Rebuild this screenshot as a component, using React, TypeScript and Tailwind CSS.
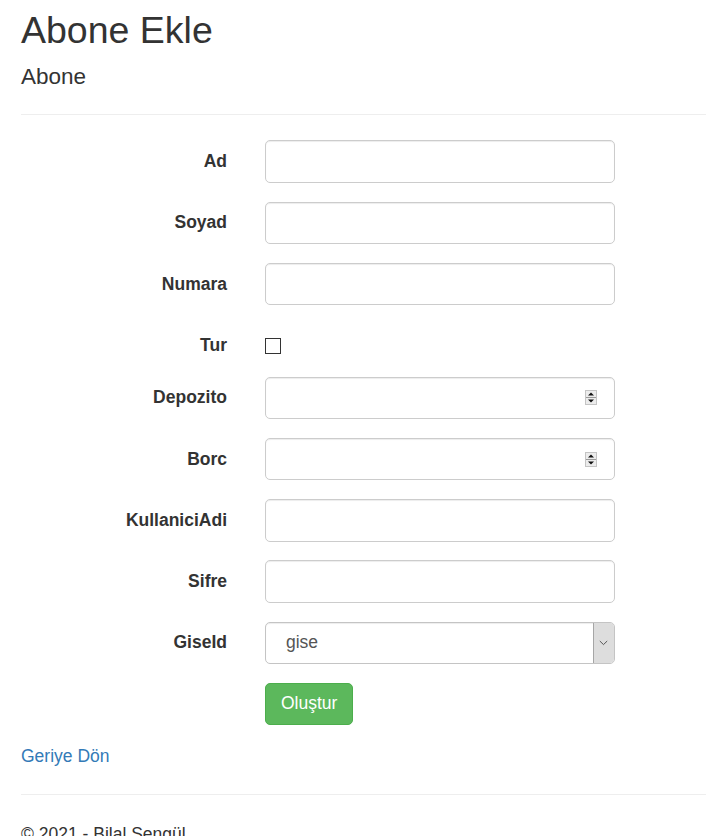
import React from "react";

const inputBox =
  "h-[42.5px] w-full rounded-[5px] border border-[#cccccc] bg-white px-[15px] text-[17.5px] text-[#555555] shadow-[inset_0_1px_1px_rgba(0,0,0,0.075)] outline-none";

function Spinner() {
  return (
    <svg width="12" height="15" viewBox="0 0 12 15" className="shrink-0">
      <rect x="0.5" y="0.5" width="11" height="14" fill="#ececec" stroke="#c4c4c4" />
      <line x1="1" y1="7.5" x2="11" y2="7.5" stroke="#9a9a9a" />
      <path d="M3 5.5 L6 2.5 L9 5.5 Z" fill="#111" />
      <path d="M3 9.5 L6 12.5 L9 9.5 Z" fill="#111" />
    </svg>
  );
}

function Row({ label, children }: { label: string; children: React.ReactNode }) {
  return (
    <div className="mb-[18.75px] flex">
      <label className="w-[206px] shrink-0 pt-[8.75px] text-right text-[17.5px] font-bold leading-[25px]">
        {label}
      </label>
      <div className="ml-[38px] w-[349.5px]">{children}</div>
    </div>
  );
}

function TextField() {
  return <input type="text" className={inputBox} />;
}

function NumberField() {
  return (
    <div className="flex h-[42.5px] w-full items-center rounded-[5px] border border-[#cccccc] bg-white pr-[17px] shadow-[inset_0_1px_1px_rgba(0,0,0,0.075)]">
      <input type="text" className="h-full min-w-0 flex-1 bg-transparent px-[15px] text-[17.5px] text-[#555555] outline-none" />
      <Spinner />
    </div>
  );
}

export default function App() {
  return (
    <div
      className="min-h-[836px] w-[706px] overflow-hidden bg-white pl-[21px] text-[17.5px] leading-[25px] text-[#333333]"
      style={{ fontFamily: '"Liberation Sans", Arial, sans-serif' }}
    >
      <h2 className="mt-[9.7px] text-[37.5px] font-normal leading-[41.25px]">Abone Ekle</h2>
      <h4 className="mt-[13.7px] text-[22.5px] font-normal leading-[24.75px]">Abone</h4>
      <hr className="mt-[25px] mb-[25px] border-0 border-t border-[#eeeeee]" />

      <form onSubmit={(e) => e.preventDefault()}>
        <Row label="Ad">
          <TextField />
        </Row>
        <Row label="Soyad">
          <TextField />
        </Row>
        <Row label="Numara">
          <TextField />
        </Row>
        <div className="mb-[18.75px] flex">
          <label className="w-[206px] shrink-0 pt-[8.75px] text-right text-[17.5px] font-bold leading-[25px]">
            Tur
          </label>
          <div className="ml-[38px] pt-[13.5px]">
            <input
              type="checkbox"
              className="block h-[16px] w-[16px] appearance-none border-[1.5px] border-[#333333] bg-white"
            />
          </div>
        </div>
        <Row label="Depozito">
          <NumberField />
        </Row>
        <Row label="Borc">
          <NumberField />
        </Row>
        <Row label="KullaniciAdi">
          <TextField />
        </Row>
        <Row label="Sifre">
          <input type="password" className={inputBox} />
        </Row>
        <Row label="GiseId">
          <div className="flex h-[42.5px] w-full overflow-hidden rounded-[5px] border border-[#c4c4c4] bg-white shadow-[inset_0_1px_1px_rgba(0,0,0,0.075)]">
            <div className="flex flex-1 items-center pl-[20px] text-[17.5px] text-[#555555]">gise</div>
            <div className="flex w-[21px] items-center justify-center border-l border-[#a6a6a6] bg-[#dddddd]">
              <svg width="9" height="6" viewBox="0 0 9 6">
                <path d="M0.8 1 L4.5 4.6 L8.2 1" fill="none" stroke="#555" strokeWidth="1" />
              </svg>
            </div>
          </div>
        </Row>
        <div className="mb-[18.75px] flex">
          <div className="ml-[244px]">
            <button
              type="submit"
              className="rounded-[5px] border border-[#4cae4c] bg-[#5cb85c] px-[15px] py-[7.5px] text-[17.5px] leading-[25px] text-white"
            >
              Oluştur
            </button>
          </div>
        </div>
      </form>

      <div>
        <a href="#" className="text-[#337ab7]">
          Geriye Dön
        </a>
      </div>
      <hr className="mt-[25px] mb-[27px] border-0 border-t border-[#eeeeee]" />
      <footer>
        <p>© 2021 - Bilal Şengül</p>
      </footer>
    </div>
  );
}
